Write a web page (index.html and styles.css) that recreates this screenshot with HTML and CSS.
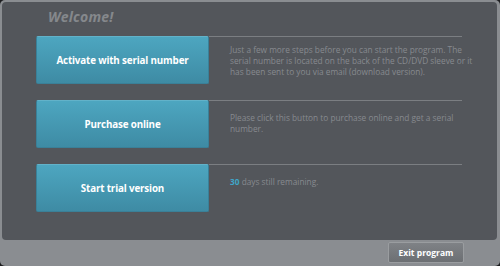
FILE: index.html
```html
<!DOCTYPE html>
<html>
<head>
<meta charset="utf-8">
<link rel="stylesheet" href="styles.css">
</head>
<body>
<div class="window">
  <div class="panel">
    <h1 class="title">Welcome!</h1>
    <div class="rows">
      <div class="row">
        <button class="action">Activate with serial number</button>
        <div class="info"><p class="info-text">Just a few more steps before you can start the program. The serial number is located on the back of the CD/DVD sleeve or it has been sent to you via email (download version).</p></div>
      </div>
      <div class="row">
        <button class="action">Purchase online</button>
        <div class="info info-two"><p class="info-text">Please click this button to purchase online and get a serial number.</p></div>
      </div>
      <div class="row">
        <button class="action">Start trial version</button>
        <div class="info info-one"><p class="info-text"><span class="days">30</span> days still remaining.</p></div>
      </div>
    </div>
  </div>
  <div class="footer">
    <button class="exit">Exit program</button>
  </div>
</div>
</body>
</html>
```

FILE: styles.css
```css
html, body {
  margin: 0;
  padding: 0;
  background: #1c1d1f;
}
body {
  width: 500px;
  height: 266px;
  overflow: hidden;
  font-family: "Open Sans", "Noto Sans", sans-serif;
}
.window {
  width: 500px;
  height: 266px;
  box-sizing: border-box;
  background: #8a8d91;
  border-radius: 5px;
  padding: 2px 3px 0 2px;
  display: flex;
  flex-direction: column;
}
.panel {
  height: 238px;
  background: #53565b;
  border-radius: 4px;
  box-sizing: border-box;
}
.title {
  margin: 0;
  padding: 5px 0 0 46px;
  height: 34px;
  box-sizing: border-box;
  font-size: 14px;
  font-weight: bold;
  font-style: italic;
  color: #85888c;
  letter-spacing: 0.2px;
}
.rows {
  display: flex;
  flex-direction: column;
  gap: 16px;
  padding-left: 34px;
}
.row {
  display: flex;
  height: 48px;
}
.action {
  width: 173px;
  height: 48px;
  flex: none;
  border: 1px solid #3a8098;
  border-top-color: #62b2c9;
  border-radius: 2px;
  background: linear-gradient(#4da6c0, #3e8ba4);
  color: #ffffff;
  font-family: "Open Sans", "Noto Sans", sans-serif;
  font-size: 9.8px;
  font-weight: bold;
  letter-spacing: -0.15px;
  padding: 0;
}
.info {
  width: 253px;
  border-top: 1px solid #7b7e82;
  box-sizing: border-box;
  padding: 7px 0 0 21px;
  font-size: 8.3px;
  line-height: 11px;
  color: #878a8f;
}
.info-text {
  margin: 0 -22px 0 0;
}
.info-two {
  padding-top: 11px;
}
.info-one {
  padding-top: 11px;
}
.days {
  color: #3fa6c8;
  font-weight: bold;
}
.footer {
  flex: 1;
  display: flex;
  justify-content: flex-end;
  align-items: flex-start;
  padding: 2px 33px 0 0;
}
.exit {
  width: 76px;
  height: 21px;
  border: 1px solid #9a9da0;
  border-radius: 2px;
  background: linear-gradient(#7f8286, #6c6f73);
  color: #ffffff;
  font-family: "Open Sans", "Noto Sans", sans-serif;
  font-size: 8.5px;
  font-weight: bold;
  padding: 0;
}
```
